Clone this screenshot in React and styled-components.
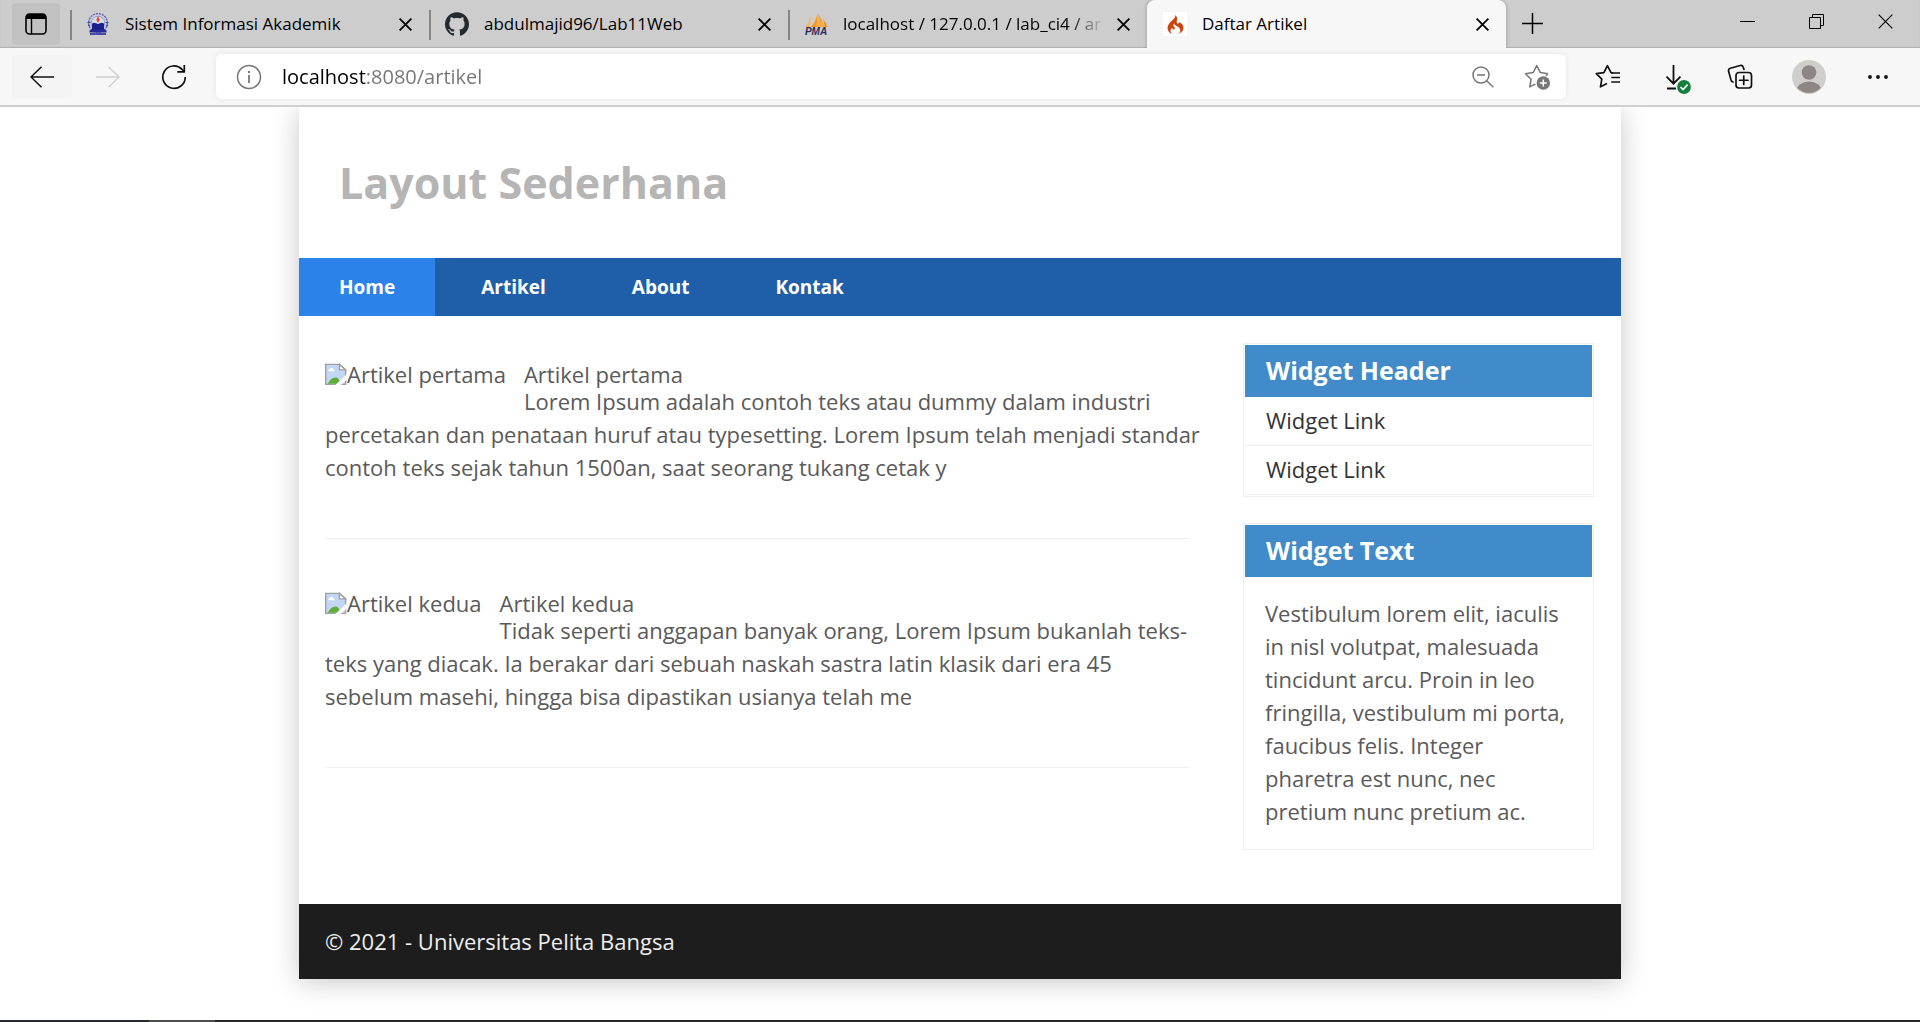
import React from "react";
import styled, { createGlobalStyle, css } from "styled-components";
import { SiGithub, SiCodeigniter } from "react-icons/si";

const GlobalStyle = createGlobalStyle`
  *, *::before, *::after { box-sizing: border-box; }
  html, body { margin: 0; background: #fff; }
  body { font-family: "Open Sans", "Noto Sans", sans-serif; color: #5a5a5a; }
  h1, h2, h3, p, ul { margin: 0; padding: 0; }
  button { border: 0; padding: 0; background: none; font: inherit; color: inherit; }
`;

const Screen = styled.div`
  min-height: 100vh;
  display: flex;
  flex-direction: column;
`;

/* ---------- browser window ---------- */

const TabStrip = styled.header`
  display: flex;
  height: 48px;
  padding-left: 12px;
  background: #cdcdcd;
  box-shadow: inset 0 -1px 1px #b0b0b0;
  color: #000;
`;

const TabMenuButton = styled.button`
  display: grid;
  place-items: center;
  width: 48px;
  height: 42px;
  margin: 3px 10px 0 0;
  border-radius: 4px;
  background: #c2c2c2;
`;

const Tab = styled.div`
  flex: 0 1 359px;
  min-width: 0;
  display: flex;
  align-items: center;
  padding: 0 14px 0 16px;
  position: relative;
  ${(p) =>
    p.$active
      ? css`
          background: #f7f7f7;
          border-radius: 8px 8px 0 0;
          box-shadow: 0 0 4px rgba(0, 0, 0, 0.25);
          clip-path: inset(0 -6px 0 -6px);
        `
      : css`
          &::before {
            content: "";
            position: absolute;
            left: 0;
            top: 10px;
            width: 2px;
            height: 30px;
            background: #868686;
          }
        `}
`;

const TabIcon = styled.span`
  flex: none;
  display: grid;
  place-items: center;
  width: 24px;
  height: 24px;
  background: ${(p) => p.$bg || "transparent"};

  svg { overflow: visible; }
`;

const TabTitle = styled.span`
  flex: 1;
  margin: 0 8px 0 15px;
  font-size: 17px;
  line-height: 24px;
  white-space: nowrap;
  overflow: hidden;
  ${(p) =>
    p.$fade &&
    css`
      mask-image: linear-gradient(to right, #000 calc(100% - 36px), transparent);
    `}
`;

const TabClose = styled.button`
  flex: none;
  display: grid;
  place-items: center;
  width: 20px;
  height: 24px;
`;

const NewTab = styled.button`
  display: grid;
  place-items: center;
  width: 53px;
  height: 46px;
`;

const WindowControls = styled.div`
  display: flex;
  margin-left: auto;
`;

const WindowButton = styled.button`
  display: grid;
  place-items: center;
  width: 69px;
  height: 43px;
`;

const Toolbar = styled.div`
  display: flex;
  align-items: center;
  gap: 6px;
  height: 59px;
  padding: 0 12px 0 12px;
  background: #f7f7f7;
  border-bottom: 2px solid #d0d0d0;
  color: #111;
`;

const ToolButton = styled.button`
  flex: none;
  display: grid;
  place-items: center;
  width: ${(p) => (p.$wide ? 66 : 60)}px;
  height: 44px;
  border-radius: 4px;
  background: ${(p) => (p.$tint ? "#f4f4f4" : "transparent")};
  color: ${(p) => (p.disabled ? "#cfcfcf" : "inherit")};
`;

const AddressBar = styled.label`
  flex: 1;
  min-width: 0;
  display: flex;
  align-items: center;
  height: 45px;
  margin: 0 6px;
  padding: 0 2px 0 20px;
  border-radius: 6px;
  background: #fff;
  box-shadow: 0 0 6px rgba(0, 0, 0, 0.08);
  color: #767676;
`;

const AddressInput = styled.input`
  flex: 1;
  min-width: 0;
  margin-left: 20px;
  padding: 0;
  border: 0;
  outline: 0;
  font: 20px/28px "Open Sans", "Noto Sans", sans-serif;
  color: transparent;
  background: linear-gradient(to right, #000 84px, #757575 84px);
  background-clip: text;
  -webkit-background-clip: text;
`;

const AddressAction = styled.button`
  display: grid;
  place-items: center;
  width: 54px;
  height: 40px;
`;

const TaskbarEdge = styled.div`
  height: 2px;
  background: linear-gradient(to right, #262b30 149px, #4a4e4e 149px, #4a4e4e 215px, #22262a 215px);
`;

/* ---------- web page ---------- */

const Viewport = styled.div`
  flex: 1;
  overflow: hidden;
  padding-bottom: 41px;
`;

const Container = styled.div`
  max-width: 1322px;
  margin: 0 auto;
  background: #fff;
  box-shadow: 0 3px 26px rgba(0, 0, 0, 0.22);
`;

const SiteHeader = styled.div`
  padding: 46px 40px;
`;

const SiteTitle = styled.h1`
  font-size: 43px;
  line-height: 59px;
  font-weight: 700;
  color: #b5b5b5;
`;

const Nav = styled.nav`
  display: flex;
  gap: 6px;
  background: #1f5faa;
`;

const NavLink = styled.a`
  padding: 15px 40px;
  font-size: 19px;
  line-height: 28px;
  font-weight: 700;
  color: #fff;
  text-decoration: none;
  background: ${(p) => (p.$active ? "#2b83ea" : "transparent")};
`;

const Columns = styled.div`
  display: flex;
  justify-content: space-between;
  padding: 27px 27px 54px 26px;
`;

const Main = styled.main`
  flex: 0 1 864px;
  padding-top: 20px;
`;

const Article = styled.article`
  padding-bottom: 54px;
  margin-bottom: 53px;
  border-bottom: 1px solid #eeeeee;
`;

const Thumb = styled.span`
  float: left;
  display: flex;
  margin: 0 18px 14px 0;
  font-size: 22px;
  line-height: 22px;
`;

const ArticleTitle = styled.h2`
  font-size: 22px;
  line-height: 22px;
  font-weight: 400;
`;

const Text = styled.p`
  font-size: 22px;
  line-height: 33px;
`;

const ArticleText = styled(Text)`
  margin-right: -16px;
`;

const Sidebar = styled.aside`
  flex: none;
  width: 351px;
  display: flex;
  flex-direction: column;
  gap: 26px;
`;

const Widget = styled.section`
  padding: 1px;
  border: 1px solid #eeeeee;
`;

const WidgetTitle = styled.h3`
  padding: 9px 21px 11px;
  font-size: 25px;
  line-height: 32px;
  font-weight: 700;
  color: #fff;
  background: #428bca;
`;

const WidgetList = styled.ul`
  list-style: none;
`;

const WidgetItem = styled.li`
  border-bottom: 1px solid #eeeeee;
`;

const WidgetLink = styled.a`
  display: block;
  padding: 8px 21px 10px;
  font-size: 22px;
  line-height: 30px;
  color: #333;
  text-decoration: none;
`;

const WidgetBody = styled.div`
  padding: 20px;
`;

const Footer = styled.footer`
  padding: 21px 26px;
  background: #1d1d1d;
  color: #eee;
`;

/* ---------- drawings ---------- */

const stroke = { fill: "none", stroke: "currentColor", strokeWidth: 1.5 };

const CrossIcon = ({ size = 13, width = 1.8 }) => (
  <svg width={size} height={size} viewBox="0 0 13 13" fill="none" stroke="currentColor" strokeWidth={width}>
    <path d="M.6.6l11.8 11.8M12.4.6L.6 12.4" />
  </svg>
);

const TabMenuIcon = () => (
  <svg width="22" height="22" viewBox="0 0 22 22">
    <rect x="1" y="1" width="20" height="20" rx="3.5" {...stroke} strokeWidth="1.6" />
    <path d="M1 6V4a3 3 0 013-3h14a3 3 0 013 3v2z" fill="currentColor" />
    <path d="M6.5 6v15" {...stroke} strokeWidth="1.4" />
  </svg>
);

const CrestIcon = () => (
  <svg width="24" height="24" viewBox="0 0 24 24">
    <circle cx="12" cy="11" r="9.4" fill="#c9cbe0" stroke="#5a5fae" strokeWidth="1.4" strokeDasharray="2 1" />
    <circle cx="12" cy="11" r="6.8" fill="#d8dae8" stroke="#8a8ec8" strokeWidth=".8" />
    <path d="M12 4l1.5 3.200-.8 2.800h-1.500l-.7-2.600z" fill="#e8452c" />
    <path d="M6 11.500l2.500-.8 3.500 1.300 3.500-1.300 2.500.8v5.500l1 2H5l1-2z" fill="#1d1f8c" />
    <path d="M3.500 18.500l2.500-1h12l2.500 1v2H3.500z" fill="#26289a" />
    <path d="M4 21.200h16v1.600H4z" fill="#26289a" />
    <path d="M1.500 10.500h3M19.500 10.500h3M2 13.500h2M20 13.500h2" stroke="#4348a0" strokeWidth="1.200" />
  </svg>
);

const PmaIcon = () => (
  <svg width="24" height="24" viewBox="0 0 24 24">
    <path d="M6.500 3C6 8 4 12 1 15h4.500C6.500 11 6.800 7 6.500 3z" fill="#f7b660" />
    <path d="M13.500 1C12.500 7 10 12 6.500 15h7z" fill="#f79a1c" />
    <path d="M14.300 2.500c2.700 3 5 7.500 5.700 12.500h-5.700z" fill="#f9a63a" />
    <path d="M19 7c2 2.500 3.500 5 4.300 8h-2.600C20.500 12.500 20 9.500 19 7z" fill="#f08c10" />
    <text x="12" y="23" textAnchor="middle" fontFamily="Liberation Sans, sans-serif" fontSize="10" fontWeight="700" fontStyle="italic" fill="#2b2a5e">PMA</text>
  </svg>
);

const BackIcon = ({ flip }) => (
  <svg width="24" height="22" viewBox="0 0 24 22" {...stroke} transform={flip ? "scale(-1 1)" : undefined}>
    <path d="M11.500.8L1 11l10.500 10.200M1 11h23" />
  </svg>
);

const ReloadIcon = () => (
  <svg width="26" height="26" viewBox="0 0 26 26" {...stroke} strokeWidth="1.700">
    <path d="M24.200 13A11.200 11.200 0 1121 5.300l2.200 2.500" />
    <path d="M23.300 1v6.900h-7" />
  </svg>
);

const InfoIcon = () => (
  <svg width="26" height="26" viewBox="0 0 26 26">
    <circle cx="13" cy="13" r="11.500" {...stroke} />
    <circle cx="13" cy="8" r="1.200" fill="currentColor" />
    <path d="M13 11v8" {...stroke} strokeWidth="1.800" />
  </svg>
);

const ZoomOutIcon = () => (
  <svg width="22" height="22" viewBox="0 0 22 22" {...stroke}>
    <circle cx="9" cy="9" r="8" />
    <path d="M5 9h8M14.700 14.700l6.600 6.600" />
  </svg>
);

const StarAddIcon = () => (
  <svg width="26" height="26" viewBox="0 0 26 26">
    <path d="M24 9.700l-7.600-1.100L12.700 1.500 9.200 8.600l-7.700 1.100 5.600 5.500-1.300 7.700 5.500-2.800M24 9.700l-2 2" {...stroke} strokeLinejoin="round" />
    <circle cx="19.300" cy="19" r="6.700" fill="currentColor" />
    <path d="M19.300 15.500v7M15.800 19h7" stroke="#fff" strokeWidth="1.500" />
  </svg>
);

const FavoritesIcon = () => (
  <svg width="26" height="26" viewBox="0 0 26 26" {...stroke} strokeWidth="1.700" strokeLinejoin="round">
    <path d="M18 8.800l-2-.2-3.600-7-3.500 7-7.600 1.100 5.500 5.400-1.300 7.700 6.500-3.400" />
    <path d="M16.300 9h8.700M16.300 13.500H25M16.300 18H25" />
  </svg>
);

const DownloadIcon = () => (
  <svg width="38" height="34" viewBox="-10 -4 38 34">
    <path d="M8.500 1v18.500M1.500 12.700l7 7 7-7M2 24.500h9" {...stroke} strokeWidth="1.800" />
    <circle cx="19" cy="23" r="6.900" fill="#15803b" />
    <path d="M15.500 23l2.500 2.600 4.600-5" fill="none" stroke="#fff" strokeWidth="1.600" />
  </svg>
);

const CollectionsIcon = () => (
  <svg width="26" height="26" viewBox="0 0 26 26" {...stroke} strokeWidth="1.700" strokeLinecap="round">
    <rect x="9" y="8.500" width="15.500" height="15.500" rx="3" />
    <path d="M16.750 12v8.500M12.500 16.250H21" />
    <path d="M17 5.500l-.8-2.300a2.500 2.500 0 00-3-1.700L3.300 4.200a2.500 2.500 0 00-1.700 3L4 16a3 3 0 002 2" />
  </svg>
);

const AvatarIcon = () => (
  <svg width="34" height="34" viewBox="0 0 34 34">
    <defs>
      <clipPath id="avatar-clip">
        <circle cx="17" cy="17" r="16" />
      </clipPath>
    </defs>
    <circle cx="17" cy="17" r="17" fill="#d0cecb" />
    <circle cx="17" cy="12.500" r="7.300" fill="#8c8784" />
    <ellipse cx="17" cy="31" rx="12.500" ry="9.500" fill="#8c8784" clipPath="url(#avatar-clip)" />
  </svg>
);

const DotsIcon = () => (
  <svg width="22" height="6" viewBox="0 0 22 6" fill="currentColor">
    <circle cx="3" cy="3" r="1.900" />
    <circle cx="11" cy="3" r="1.900" />
    <circle cx="19" cy="3" r="1.900" />
  </svg>
);

const BrokenImageIcon = () => (
  <svg width="22" height="22" viewBox="0 0 16 16">
    <path d="M.5 1h10l4.500 4v10.500H.5z" fill="#c3d6f5" stroke="#a0a0a0" />
    <path d="M2.500 5.700a1.200 1.200 0 011-1.300 1.600 1.600 0 012.800.3A1 1 0 016.800 6H2.800z" fill="#fff" />
    <path d="M2 15c1.500-3 3.500-4.500 5.500-4.500 1.600 0 3 1 3.500 4.500z" fill="#5fae3c" />
    <path d="M10.500 1v4H15z" fill="#fff" stroke="#a0a0a0" />
    <path d="M7.500 16L16 8v4l-4.500 4z" fill="#fff" />
  </svg>
);

/* ---------- content ---------- */

const tabs = [
  { title: "Sistem Informasi Akademik", icon: <CrestIcon /> },
  { title: "abdulmajid96/Lab11Web", icon: <SiGithub size={24} color="#24292e" /> },
  { title: "localhost / 127.0.0.1 / lab_ci4 / ar", icon: <PmaIcon />, fade: true },
  { title: "Daftar Artikel", icon: <SiCodeigniter size={19} color="#cf420b" />, bg: "#fff", active: true },
];

const articles = [
  {
    title: "Artikel pertama",
    text: "Lorem Ipsum adalah contoh teks atau dummy dalam industri percetakan dan penataan huruf atau typesetting. Lorem Ipsum telah menjadi standar contoh teks sejak tahun 1500an, saat seorang tukang cetak y",
  },
  {
    title: "Artikel kedua",
    text: "Tidak seperti anggapan banyak orang, Lorem Ipsum bukanlah teks-teks yang diacak. Ia berakar dari sebuah naskah sastra latin klasik dari era 45 sebelum masehi, hingga bisa dipastikan usianya telah me",
  },
];

const navItems = ["Home", "Artikel", "About", "Kontak"];

function BrowserChrome() {
  return (
    <>
      <TabStrip>
        <TabMenuButton aria-label="Tab actions"><TabMenuIcon /></TabMenuButton>
        {tabs.map((tab) => (
          <Tab key={tab.title} $active={tab.active}>
            <TabIcon $bg={tab.bg}>{tab.icon}</TabIcon>
            <TabTitle $fade={tab.fade}>{tab.title}</TabTitle>
            <TabClose aria-label="Close tab"><CrossIcon /></TabClose>
          </Tab>
        ))}
        <NewTab aria-label="New tab">
          <svg width="21" height="21" viewBox="0 0 21 21" {...stroke}><path d="M10.500 0v21M0 10.500h21" /></svg>
        </NewTab>
        <WindowControls>
          <WindowButton aria-label="Minimize">
            <svg width="15" height="15" viewBox="0 0 15 15" {...stroke} strokeWidth="1"><path d="M0 7.500h15" /></svg>
          </WindowButton>
          <WindowButton aria-label="Restore">
            <svg width="15" height="15" viewBox="0 0 15 15" {...stroke} strokeWidth="1">
              <path d="M.5 3.500h11v11H.5zM3.500 3.500v-3h11v11h-3" />
            </svg>
          </WindowButton>
          <WindowButton aria-label="Close"><CrossIcon size={15} width={1} /></WindowButton>
        </WindowControls>
      </TabStrip>
      <Toolbar>
        <ToolButton $tint aria-label="Back"><BackIcon /></ToolButton>
        <ToolButton disabled aria-label="Forward"><BackIcon flip /></ToolButton>
        <ToolButton aria-label="Reload"><ReloadIcon /></ToolButton>
        <AddressBar>
          <InfoIcon />
          <AddressInput aria-label="Address" defaultValue="localhost:8080/artikel" />
          <AddressAction aria-label="Zoom out"><ZoomOutIcon /></AddressAction>
          <AddressAction aria-label="Add to favorites"><StarAddIcon /></AddressAction>
        </AddressBar>
        <ToolButton aria-label="Favorites"><FavoritesIcon /></ToolButton>
        <ToolButton aria-label="Downloads"><DownloadIcon /></ToolButton>
        <ToolButton aria-label="Collections"><CollectionsIcon /></ToolButton>
        <ToolButton $wide aria-label="Profile"><AvatarIcon /></ToolButton>
        <ToolButton aria-label="Settings and more"><DotsIcon /></ToolButton>
      </Toolbar>
    </>
  );
}

export default function App() {
  return (
    <Screen>
      <GlobalStyle />
      <BrowserChrome />
      <Viewport>
        <Container>
          <SiteHeader>
            <SiteTitle>Layout Sederhana</SiteTitle>
          </SiteHeader>
          <Nav>
            {navItems.map((item, i) => (
              <NavLink key={item} href="#" $active={i === 0}>{item}</NavLink>
            ))}
          </Nav>
          <Columns>
            <Main>
              {articles.map((a) => (
                <Article key={a.title}>
                  <Thumb><BrokenImageIcon />{a.title}</Thumb>
                  <ArticleTitle>{a.title}</ArticleTitle>
                  <ArticleText>{a.text}</ArticleText>
                </Article>
              ))}
            </Main>
            <Sidebar>
              <Widget>
                <WidgetTitle>Widget Header</WidgetTitle>
                <WidgetList>
                  <WidgetItem><WidgetLink href="#">Widget Link</WidgetLink></WidgetItem>
                  <WidgetItem><WidgetLink href="#">Widget Link</WidgetLink></WidgetItem>
                </WidgetList>
              </Widget>
              <Widget>
                <WidgetTitle>Widget Text</WidgetTitle>
                <WidgetBody>
                  <Text>
                    Vestibulum lorem elit, iaculis in nisl volutpat, malesuada tincidunt arcu. Proin in leo
                    fringilla, vestibulum mi porta, faucibus felis. Integer pharetra est nunc, nec pretium nunc
                    pretium ac.
                  </Text>
                </WidgetBody>
              </Widget>
            </Sidebar>
          </Columns>
          <Footer>
            <Text>© 2021 - Universitas Pelita Bangsa</Text>
          </Footer>
        </Container>
      </Viewport>
      <TaskbarEdge />
    </Screen>
  );
}
